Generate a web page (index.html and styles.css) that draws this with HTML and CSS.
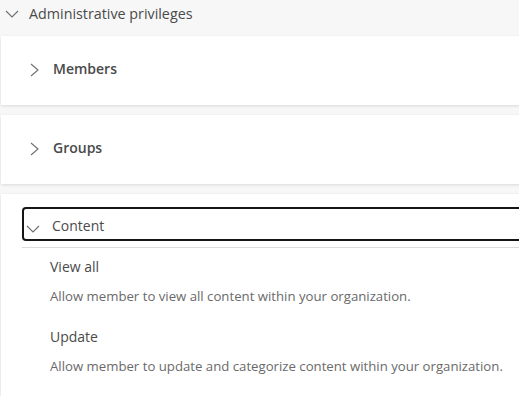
FILE: index.html
```html
<!DOCTYPE html>
<html lang="en">
<head>
    <meta charset="UTF-8">
    <meta name="viewport" content="width=device-width, initial-scale=1.0">
    <title>Administrative privileges</title>
    <link rel="stylesheet" href="styles.css">
</head>
<body>
    <div class="privileges">
        <div class="section-header">
            <svg class="chevron-down" width="14" height="8" viewBox="0 0 14 8"><path d="M1 1 L7 7 L13 1" fill="none" stroke="#6e6e6e" stroke-width="1.1"/></svg>
            <span>Administrative privileges</span>
        </div>

        <div class="card">
            <div class="card-header">
                <svg class="chevron-right" width="9" height="14" viewBox="0 0 9 14"><path d="M1 1 L8 7 L1 13" fill="none" stroke="#6e6e6e" stroke-width="1.1"/></svg>
                <span>Members</span>
            </div>
        </div>

        <div class="card">
            <div class="card-header">
                <svg class="chevron-right" width="9" height="14" viewBox="0 0 9 14"><path d="M1 1 L8 7 L1 13" fill="none" stroke="#6e6e6e" stroke-width="1.1"/></svg>
                <span>Groups</span>
            </div>
        </div>

        <div class="card open">
            <div class="card-header focused">
                <svg class="chevron-down" width="14" height="8" viewBox="0 0 14 8"><path d="M1 1 L7 7 L13 1" fill="none" stroke="#6e6e6e" stroke-width="1.1"/></svg>
                <span>Content</span>
            </div>
            <div class="card-body">
                <div class="privilege">
                    <div class="privilege-name">View all</div>
                    <div class="privilege-desc">Allow member to view all content within your organization.</div>
                </div>
                <div class="privilege">
                    <div class="privilege-name">Update</div>
                    <div class="privilege-desc">Allow member to update and categorize content within your organization.</div>
                </div>
            </div>
        </div>
    </div>
</body>
</html>
```

FILE: styles.css
```css
/* Base Styles */
body {
    font-family: "Open Sans", "Noto Sans", Arial, sans-serif;
    background-color: #f7f7f7;
    margin: 0;
    padding: 0;
    color: #4a4a4a;
    overflow: hidden;
}

.privileges {
    width: 540px;
}

.section-header {
    height: 27px;
    display: flex;
    align-items: center;
    gap: 10px;
    padding-left: 5px;
    padding-bottom: 9px;
    font-size: 14.3px;
}

.card {
    background-color: white;
    margin: 0 0 10px 1px;
    box-shadow: 0 1px 3px rgba(0, 0, 0, 0.12);
}

.card-header {
    height: 64px;
    padding-bottom: 5px;
    display: flex;
    align-items: center;
    gap: 14px;
    padding-left: 29px;
    font-size: 14px;
    font-weight: 600;
}

.card-header .chevron-right {
    margin-top: 4px;
}

.card.open {
    padding-top: 13px;
}

.card-header.focused {
    height: 30px;
    padding-bottom: 0;
    margin-left: 21px;
    padding-left: 2px;
    gap: 12px;
    border: 2px solid #151515;
    border-radius: 4px;
    font-weight: 500;
}

.card-header.focused span {
    margin-top: 3px;
}

.card-header.focused svg {
    margin-top: 9px;
}

.card-body {
    margin-left: 21px;
    margin-top: 6px;
    border-top: 1px solid #dcdcdc;
    padding: 9px 0 10px 28px;
}

.privilege {
    margin-bottom: 21px;
}

.privilege-name {
    font-size: 14px;
    line-height: 20px;
}

.privilege-desc {
    font-size: 13.2px;
    color: #6a6a6a;
    line-height: 20px;
    margin-top: 9px;
}
```
